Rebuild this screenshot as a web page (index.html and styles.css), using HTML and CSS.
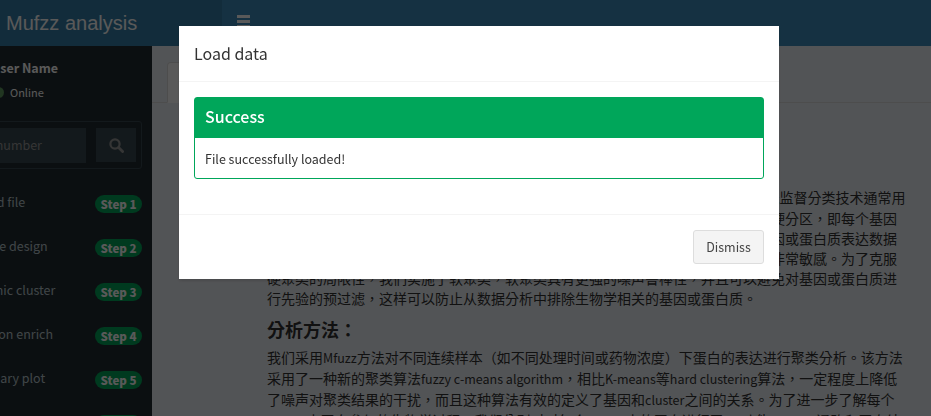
FILE: index.html
```html
<!DOCTYPE html>
<html lang="en">
<head>
    <meta charset="UTF-8">
    <meta name="viewport" content="width=device-width, initial-scale=1.0">
    <title>Mufzz analysis</title>
    <link rel="stylesheet" href="styles.css">
</head>
<body>
    <!-- Header -->
    <header class="top-bar">
        <a class="logo" href="#">Mufzz analysis</a>
        <nav class="navbar">
            <a class="menu-toggle" href="#" aria-label="Toggle navigation">
                <span></span><span></span><span></span>
            </a>
        </nav>
    </header>

    <div class="wrapper">
        <!-- Sidebar -->
        <aside class="sidebar">
            <div class="sidebar-inner">
                <div class="user-panel">
                    <p class="user-name">User Name</p>
                    <p class="user-status"><i class="status-dot"></i>Online</p>
                </div>
                <form class="sidebar-form">
                    <input type="text" placeholder="Search by number">
                    <button type="button" aria-label="Search">
                        <svg width="15" height="15" viewBox="0 0 15 15"><circle cx="6" cy="6" r="4.6" fill="none" stroke="currentColor" stroke-width="2.2"/><path d="M9.6 9.6l4 4" stroke="currentColor" stroke-width="2.8" stroke-linecap="round"/></svg>
                    </button>
                </form>
                <ul class="menu">
                    <li><span>Upload file</span><b class="badge">Step 1</b></li>
                    <li><span>Sample design</span><b class="badge">Step 2</b></li>
                    <li><span>Dynamic cluster</span><b class="badge">Step 3</b></li>
                    <li><span>Function enrich</span><b class="badge">Step 4</b></li>
                    <li><span>Summary plot</span><b class="badge">Step 5</b></li>
                    <li><span>Download</span><b class="badge">Step 6</b></li>
                </ul>
            </div>
        </aside>

        <!-- Main Content -->
        <main class="content">
            <div class="tabs">
                <a class="tab active" href="#">Introduction</a>
            </div>
            <div class="article">
                <p><span class="latin">Omics</span>聚类分析是一种常用的数据挖掘方法，能够发现表达模式相似的蛋白，然而无监督分类技术通常用于硬聚类，这种方法将每个基因或蛋白质只划分到一个类别中，从而产生了所谓的硬分区，即每个基因都只属于一个聚类。硬聚类方法忽略了这一点，而且对于来自多个不同时间点的基因或蛋白质表达数据来说，它们之间的关系往往是连续的，同时硬聚类算法对于数据中存在着的噪声也非常敏感。为了克服硬聚类的局限性，我们实施了软聚类，软聚类具有更强的噪声鲁棒性，并且可以避免对基因或蛋白质进行先验的预过滤，这样可以防止从数据分析中排除生物学相关的基因或蛋白质。</p>
                <h3>分析方法：</h3>
                <p>我们采用<span class="latin">Mfuzz</span>方法对不同连续样本（如不同处理时间或药物浓度）下蛋白的表达进行聚类分析。该方法采用了一种新的聚类算法<span class="latin">fuzzy c-means algorithm</span>，相比<span class="latin">K-means</span>等<span class="latin">hard clustering</span>算法，一定程度上降低了噪声对聚类结果的干扰，而且这种算法有效的定义了基因和<span class="latin">cluster</span>之间的关系。为了进一步了解每个<span class="latin">cluster</span>中蛋白参与的生物学过程，我们分别对对每个<span class="latin">cluster</span>中的蛋白进行了<span class="latin">GO</span>功能、<span class="latin">KEGG</span>通路和蛋白结构域的富集分析。</p>
            </div>
        </main>
    </div>

    <!-- Modal -->
    <div class="backdrop"></div>
    <div class="modal-layer">
        <div class="modal">
            <div class="modal-header">
                <h4>Load data</h4>
            </div>
            <div class="modal-body">
                <div class="box">
                    <div class="box-head">Success</div>
                    <div class="box-body">File successfully loaded!</div>
                </div>
            </div>
            <div class="modal-footer">
                <button type="button" class="btn">Dismiss</button>
            </div>
        </div>
    </div>
</body>
</html>
```

FILE: styles.css
```css
/* Reset styles */
* {
    margin: 0;
    padding: 0;
    box-sizing: border-box;
}

html, body {
    height: 416px;
    overflow: hidden;
}

body {
    font-family: "Noto Sans CJK TC", "Liberation Sans", sans-serif;
    font-size: 12.5px;
    line-height: 20px;
    color: #333;
    background-color: #ecf0f5;
}

a {
    text-decoration: none;
}

/* Header styles */
.top-bar {
    display: flex;
    height: 46px;
}

.logo {
    width: 222px;
    padding-left: 6px;
    font-family: "Liberation Sans", Arial, sans-serif;
    font-size: 20px;
    line-height: 46px;
    color: #fff;
    background-color: #367fa9;
}

.navbar {
    flex: 1;
    background-color: #3c8dbc;
}

.menu-toggle {
    display: flex;
    flex-direction: column;
    gap: 2px;
    width: 13px;
    margin: 15px 0 0 15px;
}

.menu-toggle span {
    height: 3px;
    background-color: #fff;
}

/* Layout */
.wrapper {
    display: flex;
    height: 370px;
}

/* Sidebar styles */
.sidebar {
    width: 152px;
    flex-shrink: 0;
    overflow: hidden;
    background-color: #222d32;
    color: #b8c7ce;
}

.sidebar-inner {
    width: 230px;
    margin-left: -78px;
}

.user-panel {
    height: 75px;
    padding: 12px 0 0 71px;
}

.user-name {
    margin-left: -2px;
    font-weight: 700;
    color: #fff;
}

.user-status {
    display: flex;
    align-items: center;
    margin-top: 4px;
    font-size: 11px;
    color: #fff;
}

.status-dot {
    width: 11px;
    height: 11px;
    margin-right: 6px;
    border-radius: 50%;
    background-color: #5f9a5f;
}

.sidebar-form {
    display: flex;
    justify-content: space-between;
    width: 210px;
    height: 48px;
    margin: 0 10px;
    padding: 6px 5px 0 0;
    border: 1px solid #374850;
    border-radius: 3px;
}

.sidebar-form input {
    width: 153px;
    height: 35px;
    padding: 0 0 2px 3px;
    border: 0;
    font: inherit;
    background-color: #374850;
    color: #999;
}

.sidebar-form input::placeholder {
    color: #999;
}

.sidebar-form button {
    display: flex;
    align-items: center;
    justify-content: center;
    width: 40px;
    height: 34px;
    border: 0;
    background-color: #374850;
    color: #999;
}

.menu {
    margin-top: 11px;
    list-style: none;
}

.menu li {
    display: flex;
    align-items: center;
    justify-content: space-between;
    height: 44px;
    padding: 0 10px 0 40px;
}

.badge {
    width: 47px;
    height: 18px;
    margin-top: 4px;
    border-radius: 9px;
    font-size: 11.5px;
    font-weight: 900;
    line-height: 18px;
    text-align: center;
    color: #fff;
    background-color: #00a65a;
}

/* Main content styles */
.content {
    flex: 1;
    min-width: 0;
    padding-top: 16px;
}

.tabs {
    height: 41px;
    padding-left: 15px;
    border-bottom: 1px solid #ddd;
}

.tab {
    display: block;
    width: 120px;
    height: 41px;
    padding: 10px 15px;
    border: 1px solid #ddd;
    border-bottom-color: transparent;
    border-radius: 4px 4px 0 0;
    color: #555;
    background-color: #fff;
}

.article {
    width: 755px;
    padding: 84px 0 0 115px;
    font-size: 14px;
}

.article p {
    margin-bottom: 10px;
}

.article .latin {
    font-size: 12.5px;
}

.article h3 {
    margin: 11px 0 8px;
    font-size: 18px;
    font-weight: 700;
    line-height: 20px;
}

/* Modal styles */
.backdrop {
    position: fixed;
    inset: 0;
    background-color: rgba(0, 0, 0, 0.65);
}

.modal-layer {
    position: fixed;
    inset: 0;
    padding: 26px 0 0 179px;
}

.modal {
    width: 600px;
    background-color: #fff;
    box-shadow: 0 2px 3px rgba(0, 0, 0, 0.125);
}

.modal-header {
    height: 56px;
    padding: 14px 15px;
    border-bottom: 1px solid #f4f4f4;
}

.modal-header h4 {
    font-size: 16px;
    font-weight: 400;
    line-height: 26px;
}

.modal-body {
    padding: 15px;
}

.box {
    margin-bottom: 20px;
    border: 1px solid #00a65a;
    border-radius: 3px;
}

.box-head {
    height: 40px;
    padding: 0 10px;
    font-size: 16px;
    font-weight: 500;
    line-height: 37px;
    color: #fff;
    background-color: #00a65a;
}

.box-body {
    height: 40px;
    padding: 11px 10px 9px;
}

.modal-footer {
    display: flex;
    justify-content: flex-end;
    padding: 15px;
    border-top: 1px solid #f4f4f4;
}

.btn {
    width: 71px;
    height: 34px;
    border: 1px solid #ddd;
    border-radius: 3px;
    font: inherit;
    color: #444;
    background-color: #f4f4f4;
}
```
